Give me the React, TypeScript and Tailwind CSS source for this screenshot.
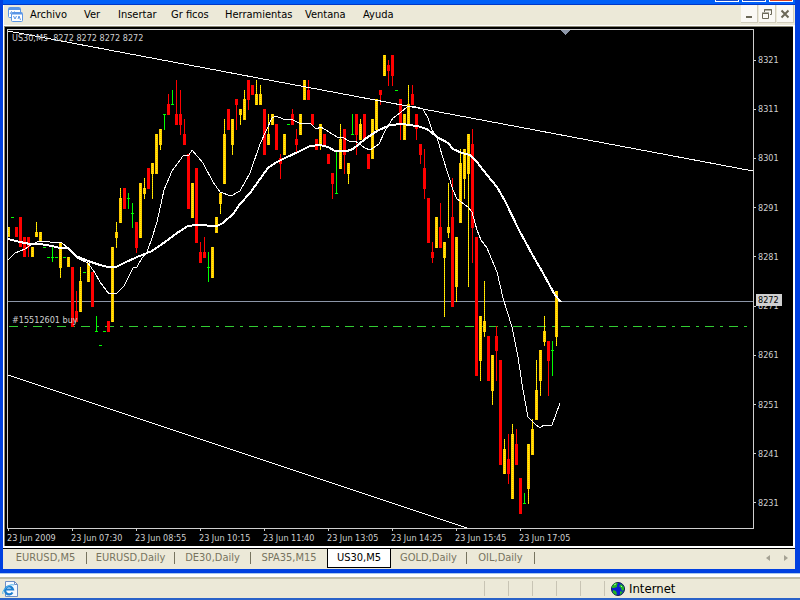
const YELLOW = '#ffc800';
const RED = '#ff0000';
const GREEN = '#00ff00';

const menus = [
  { label: 'Archivo', width: 'w-[54px]' },
  { label: 'Ver', width: 'w-[34px]' },
  { label: 'Insertar', width: 'w-[53px]' },
  { label: 'Gr ficos', width: 'w-[54px]' },
  { label: 'Herramientas', width: 'w-20' },
  { label: 'Ventana', width: 'w-[58px]' },
  { label: 'Ayuda', width: 'w-10' },
];

const tabs = [
  { label: 'EURUSD,M5', width: 'w-[82px]' },
  { label: 'EURUSD,Daily', width: 'w-[88px]' },
  { label: 'DE30,Daily', width: 'w-[76px]' },
  { label: 'SPA35,M15', width: 'w-[76px]' },
  { label: 'US30,M5', width: 'w-16' },
  { label: 'GOLD,Daily', width: 'w-[76px]' },
  { label: 'OIL,Daily', width: 'w-[68px]' },
];

const prices = ['8321', '8311', '8301', '8291', '8281', '8271', '8261', '8251', '8241', '8231'];

const times = [
  '23 Jun 2009',
  '23 Jun 07:30',
  '23 Jun 08:55',
  '23 Jun 10:15',
  '23 Jun 11:40',
  '23 Jun 13:05',
  '23 Jun 14:25',
  '23 Jun 15:45',
  '23 Jun 17:05',
];

type Kind = 'y' | 'r' | 'g';

// one bar every 4px: kind, high, body top, body bottom, low
const bars: [Kind, number, number, number, number][] = [
  ['y', 227, 227, 237, 237],
  ['g', 217, 217, 217, 217],
  ['r', 227, 227, 237, 237],
  ['r', 217, 217, 247, 247],
  ['r', 237, 237, 257, 257],
  ['r', 237, 237, 247, 257],
  ['y', 247, 247, 257, 257],
  ['y', 222, 232, 237, 237],
  ['y', 232, 232, 242, 242],
  ['g', 247, 247, 247, 247],
  ['g', 257, 257, 257, 257],
  ['g', 247, 257, 257, 262],
  ['g', 257, 257, 257, 257],
  ['y', 242, 242, 268, 278],
  ['g', 257, 257, 257, 257],
  ['y', 257, 257, 267, 267],
  ['r', 267, 267, 327, 327],
  ['r', 291, 311, 322, 322],
  ['y', 267, 281, 312, 312],
  ['g', 272, 272, 272, 272],
  ['y', 263, 263, 282, 282],
  ['r', 272, 272, 307, 307],
  ['g', 316, 331, 331, 331],
  ['g', 345, 345, 345, 345],
  ['g', 331, 331, 331, 331],
  ['r', 321, 321, 332, 332],
  ['y', 247, 247, 322, 322],
  ['y', 222, 232, 238, 248],
  ['y', 188, 198, 223, 223],
  ['r', 188, 188, 209, 209],
  ['g', 193, 198, 198, 209],
  ['g', 203, 213, 213, 228],
  ['r', 222, 222, 248, 253],
  ['y', 183, 183, 238, 238],
  ['y', 178, 188, 194, 199],
  ['r', 168, 168, 189, 189],
  ['y', 163, 163, 174, 199],
  ['y', 134, 134, 174, 174],
  ['y', 129, 129, 145, 150],
  ['g', 114, 114, 114, 130],
  ['r', 94, 104, 115, 115],
  ['g', 90, 104, 104, 104],
  ['r', 80, 114, 125, 125],
  ['r', 90, 114, 125, 135],
  ['r', 119, 134, 145, 145],
  ['r', 154, 154, 209, 209],
  ['y', 183, 183, 218, 218],
  ['r', 168, 168, 243, 243],
  ['r', 242, 252, 263, 263],
  ['r', 237, 252, 258, 258],
  ['g', 252, 267, 267, 282],
  ['y', 247, 247, 278, 278],
  ['y', 217, 217, 233, 233],
  ['y', 193, 193, 204, 214],
  ['y', 119, 134, 184, 184],
  ['r', 109, 109, 130, 130],
  ['y', 119, 119, 145, 155],
  ['r', 99, 99, 105, 130],
  ['y', 109, 109, 115, 125],
  ['y', 90, 99, 120, 120],
  ['r', 80, 80, 100, 110],
  ['r', 85, 85, 95, 95],
  ['y', 80, 94, 105, 105],
  ['y', 85, 94, 105, 105],
  ['r', 109, 109, 155, 155],
  ['y', 114, 134, 145, 145],
  ['y', 114, 114, 125, 125],
  ['r', 124, 124, 150, 150],
  ['r', 154, 158, 164, 179],
  ['y', 134, 134, 155, 155],
  ['g', 124, 124, 124, 124],
  ['r', 109, 114, 125, 125],
  ['r', 129, 139, 145, 152],
  ['y', 114, 114, 135, 135],
  ['y', 80, 80, 100, 100],
  ['r', 80, 90, 100, 100],
  ['r', 114, 114, 125, 125],
  ['r', 139, 139, 150, 150],
  ['y', 124, 124, 145, 150],
  ['r', 134, 134, 145, 145],
  ['r', 154, 154, 164, 164],
  ['r', 173, 173, 184, 199],
  ['g', 150, 193, 193, 194],
  ['y', 124, 139, 169, 169],
  ['r', 129, 129, 155, 174],
  ['y', 163, 163, 174, 184],
  ['g', 114, 134, 134, 135],
  ['r', 114, 114, 135, 155],
  ['y', 119, 124, 140, 140],
  ['r', 114, 114, 140, 140],
  ['r', 154, 154, 169, 169],
  ['y', 119, 119, 159, 159],
  ['y', 99, 99, 130, 130],
  ['r', 90, 90, 95, 105],
  ['y', 55, 55, 76, 76],
  ['r', 60, 65, 71, 86],
  ['r', 55, 55, 76, 86],
  ['g', 90, 90, 90, 90],
  ['r', 99, 99, 124, 140],
  ['y', 114, 114, 140, 140],
  ['y', 85, 104, 124, 124],
  ['r', 85, 94, 105, 105],
  ['r', 114, 114, 129, 140],
  ['r', 144, 144, 155, 164],
  ['r', 149, 168, 189, 199],
  ['r', 198, 198, 243, 243],
  ['r', 242, 252, 258, 263],
  ['y', 217, 217, 248, 248],
  ['r', 203, 227, 248, 248],
  ['y', 242, 242, 258, 317],
  ['y', 183, 227, 233, 238],
  ['r', 178, 217, 307, 307],
  ['y', 237, 237, 287, 302],
  ['y', 149, 163, 223, 223],
  ['y', 149, 149, 179, 199],
  ['y', 134, 134, 174, 287],
  ['r', 129, 144, 228, 263],
  ['r', 237, 237, 376, 376],
  ['y', 316, 316, 361, 381],
  ['y', 281, 321, 332, 337],
  ['r', 336, 336, 381, 381],
  ['y', 355, 355, 391, 405],
  ['r', 326, 336, 351, 381],
  ['r', 360, 360, 465, 465],
  ['y', 439, 449, 474, 474],
  ['r', 434, 459, 474, 484],
  ['y', 424, 434, 499, 499],
  ['r', 429, 444, 465, 465],
  ['r', 478, 478, 514, 514],
  ['g', 493, 503, 503, 504],
  ['y', 444, 444, 489, 504],
  ['y', 419, 429, 455, 455],
  ['y', 360, 390, 420, 420],
  ['y', 350, 350, 381, 396],
  ['y', 316, 331, 342, 346],
  ['r', 341, 341, 361, 396],
  ['g', 341, 350, 350, 376],
  ['y', 291, 291, 337, 346],
];

const slowAverage =
  '8,239 20,242 30,244 40,244 52,246 60,248 68,248 76,256 88,261 100,265 108,267 116,267 124,263 137,257 152,251 165,242 177,233 188,226 197,225 217,226 223,223 233,214 240,204 250,193 260,179 268,168 275,163 285,158 298,152 310,146 320,145 328,147 335,151 347,151 353,149 365,139 377,131 390,125 402,124 417,126 427,129 437,137 448,143 453,149 462,153 470,155 477,162 487,175 497,187 505,201 519,230 532,254 543,273 555,295 561,302';

const fastAverage =
  '8,260 15,253 25,249 32,244 40,241 50,242 62,243 68,248 77,258 88,263 95,273 100,282 109,294 117,293 124,286 133,268 137,267 142,258 147,252 152,238 157,222 164,190 172,171 183,156 189,155 192,150 203,163 213,182 220,192 231,196 240,191 250,173 260,144 272,118 276,116 283,119 291,119 299,123 311,124 316,129 321,127 337,137 342,137 349,141 355,141 365,148 370,150 379,144 385,131 393,118 400,113 407,107 413,106 423,109 428,118 432,130 437,137 442,155 448,174 453,190 457,199 468,207 472,212 477,230 481,240 487,248 497,272 503,298 512,327 518,357 523,390 528,417 535,424 540,428 544,425 552,425 560,403';

function Bar({ index }: { index: number }) {
  const [kind, high, top, bottom, low] = bars[index];
  const x = 8 + index * 4;
  const fill = kind === 'y' ? YELLOW : kind === 'r' ? RED : GREEN;
  return (
    <g fill={fill}>
      {low > high && <rect x={x} y={high} width="1" height={low - high} />}
      <rect x={x - 1} y={top} width="3" height={Math.max(bottom - top, 1)} />
      {kind === 'y' && (
        <line x1={x + 0.5} y1={high} x2={x + 0.5} y2={low} stroke="#ffff00" strokeDasharray="1 1" />
      )}
    </g>
  );
}

function Plot() {
  return (
    <svg
      viewBox="8 30 745 498"
      preserveAspectRatio="none"
      shapeRendering="crispEdges"
      className="absolute inset-0 h-full w-full"
      role="img"
      aria-label="US30,M5"
    >
      <line x1="8" y1="301.5" x2="753" y2="301.5" stroke="#8c96a8" />
      <line x1="9" y1="326.5" x2="750" y2="326.5" stroke="#32cd32" strokeDasharray="9 6 3 6" />
      {bars.map((_, i) => (
        <Bar key={i} index={i} />
      ))}
      <g fill="none" stroke="#ffffff">
        <line x1="8" y1="31" x2="753" y2="171" />
        <line x1="8" y1="375" x2="467" y2="528" />
        <polyline points={fastAverage} />
        <polyline points={slowAverage} strokeWidth="2" />
      </g>
      <path d="M561 30h9l-4.500 5z" fill="#8c96a8" />
    </svg>
  );
}

function ChartIcon() {
  return (
    <svg width="16" height="16" viewBox="0 0 16 16" fill="none" stroke="#5a96e6" className="shrink-0">
      <rect x=".5" y=".5" width="12" height="10" rx="1" fill="#fff" />
      <path d="M1 2h11" strokeWidth="2" />
      <path d="M2 7l1.500-2.500L5 7l1.500-2.500" />
      <rect x="3.500" y="5.500" width="11" height="9" rx="1" fill="#fff" />
      <path d="M4 6.500h10" strokeWidth="2" />
      <path d="M5.500 9L7 12l1.500-3M10 12l1-3 1.500 4" />
    </svg>
  );
}

function ExplorerIcon() {
  return (
    <svg width="16" height="16" viewBox="0 0 16 16" className="shrink-0">
      <path d="M3.500.5h9l3 3v12h-12z" fill="#f4f8ff" stroke="#6e8fc4" />
      <path d="M12.500.5v3h3" fill="none" stroke="#6e8fc4" />
      <path d="M10.500 11.500A4 4 0 1 1 11 8.500H4" fill="none" stroke="#1e7fd0" strokeWidth="2.200" />
      <path d="M1 13C-1 10 7 2 12 4" fill="none" stroke="#55b8ee" />
    </svg>
  );
}

function GlobeIcon() {
  return (
    <svg width="14" height="14" viewBox="0 0 14 14" className="shrink-0">
      <circle cx="7" cy="7" r="6.500" fill="#0a1ed0" stroke="#10204a" />
      <path d="M1 4l3-3 3 0-1 2 0 2-3 1-2 0zM8 4l2-2 3 3 0 3-2 1-1-3zM2 8l3 1 1 3-1 1-3-2zM9 9l3 1-3 3z" fill="#22b422" />
      <path d="M3 3l2-1M10 4l1 1" stroke="#9cf09c" />
    </svg>
  );
}

export default function App() {
  return (
    <div className="flex h-screen flex-col overflow-hidden bg-[#ece9d8] font-['DejaVu_Sans_Condensed','Liberation_Sans',sans-serif] text-[11px] text-black">
      <div className="flex min-h-0 flex-1 flex-col border-r-5 border-b-4 border-l-3 border-[#0040e0]">
        <div className="flex h-[5px] shrink-0 justify-end gap-[3px] border-b border-[#0038c8] bg-[#0060f8] pr-0.5">
          <span className="h-0.5 w-6 border-x border-b border-white bg-[#1848c8]" />
          <span className="h-0.5 w-6 border-x border-b border-white bg-[#1848c8]" />
          <span className="h-0.5 w-6 border-x border-b border-white bg-[#d84020]" />
        </div>

        <header className="flex h-[21px] shrink-0 items-center border-b border-l border-white bg-[#ece9d8] pl-1">
          <ChartIcon />
          <nav className="flex pl-1.5">
            {menus.map(({ label, width }) => (
              <button key={label} className={`${width} text-left whitespace-nowrap`}>
                {label}
              </button>
            ))}
          </nav>
          <div className="ml-auto flex h-full items-start gap-px pr-px">
            <button aria-label="Minimizar" className="flex h-[18px] w-[17px] items-center justify-center border-r border-b border-[#d0ccbc] bg-[#faf9f5]">
              <svg width="10" height="10" viewBox="0 0 10 10"><path d="M2 8h6" stroke="#6b6858" strokeWidth="2" /></svg>
            </button>
            <button aria-label="Restaurar" className="flex h-[18px] w-[17px] items-center justify-center border-r border-b border-[#d0ccbc] bg-[#faf9f5]">
              <svg width="10" height="10" viewBox="0 0 10 10" fill="none" stroke="#6b6858"><path d="M2.500 3V.5h7v5H8M.5 4.500h6v5h-6zM2 1h8M0 4h7" /></svg>
            </button>
            <button aria-label="Cerrar" className="flex h-[18px] w-[17px] items-center justify-center border-r border-b border-[#d0ccbc] bg-[#faf9f5]">
              <svg width="10" height="10" viewBox="0 0 10 10"><path d="M1.500 1.500l7 7M8.500 1.500l-7 7" stroke="#6b6858" strokeWidth="2" /></svg>
            </button>
          </div>
        </header>

        <div className="flex min-h-0 flex-1 flex-col border-r-2 border-b-2 border-l border-white">
          <main className="flex min-h-0 flex-1 flex-col border-t border-l border-[#8a8774] bg-black pt-0.5 pl-0.5 text-[9px] text-[#d0d0d0]">
            <div className="flex min-h-0 flex-1">
              <div className="relative flex-1 border border-[#d0d0d0]">
                <Plot />
                <p className="absolute top-0.5 left-1 leading-3 whitespace-pre">US30,M5  8272 8272 8272 8272</p>
                <p className="absolute top-[57%] left-1 leading-3">#15512601 buy</p>
              </div>
              <div className="relative flex w-[39px] flex-col justify-between pt-[25px] pb-5">
                {prices.map((price) => (
                  <div key={price} className="flex items-center gap-0.5 leading-3">
                    <span className="h-px w-0.5 bg-[#d0d0d0]" />
                    {price}
                  </div>
                ))}
                <span className="absolute top-[53%] left-0.5 w-[26px] bg-[#d0d0d0] pl-0.5 leading-3 text-black">8272</span>
              </div>
            </div>
            <div className="flex h-[17px] shrink-0">
              {times.map((time) => (
                <div key={time} className="w-16 whitespace-nowrap">
                  <span className="ml-px block h-0.5 w-px bg-[#d0d0d0]" />
                  <span className="block leading-[15px]">{time}</span>
                </div>
              ))}
            </div>
          </main>
        </div>

        <div className="flex h-[21px] shrink-0 items-start border-t border-black pl-0.5 text-[#77745f]">
          {tabs.map(({ label, width }) =>
            label === 'US30,M5' ? (
              <button key={label} className={`${width} h-[19px] border-x border-b border-black bg-white text-black`}>
                {label}
              </button>
            ) : (
              <button key={label} className={`${width} flex h-[18px] items-center whitespace-nowrap`}>
                <span className="flex-1">{label}</span>
                {label !== 'SPA35,M15' && <span className="h-3 w-px bg-[#77745f]" />}
              </button>
            ),
          )}
          <div className="ml-auto flex gap-1 pr-0.5">
            <button aria-label="Anterior" className="flex h-[18px] w-3.5 items-center justify-center">
              <svg width="4" height="6" viewBox="0 0 4 6"><path d="M4 0v6L0 3z" fill="#a5a294" /></svg>
            </button>
            <button aria-label="Siguiente" className="flex h-[18px] w-3.5 items-center justify-center">
              <svg width="4" height="6" viewBox="0 0 4 6"><path d="M0 0v6l4-3z" fill="#a5a294" /></svg>
            </button>
          </div>
        </div>
      </div>

      <div className="h-1 shrink-0 border-t border-[#a8c8f0] bg-white" />
      <footer className="flex h-[21px] shrink-0 items-center border-t-2 border-[#c0bda8] pl-0.5">
        <ExplorerIcon />
        <div className="ml-auto flex h-full items-center py-0.5">
          {[0, 1, 2, 3, 4].map((pane) => (
            <span key={pane} className="h-full w-6 border-l border-[#c8c4b4]" />
          ))}
          <div className="flex h-full w-[196px] items-center gap-1 border-l border-[#c8c4b4] pl-1.5 text-[13px]">
            <GlobeIcon />
            Internet
          </div>
        </div>
      </footer>
      <div className="h-0.5 shrink-0 bg-[#2a62c8]" />
    </div>
  );
}
